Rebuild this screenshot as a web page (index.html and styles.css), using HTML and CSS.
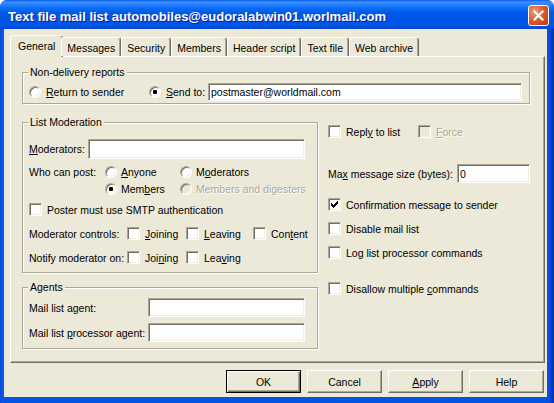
FILE: index.html
```html
<!DOCTYPE html>
<html lang="en">
<head>
<meta charset="utf-8">
<title>Text file mail list</title>
<link rel="stylesheet" href="styles.css">
</head>
<body>
<div class="window">
  <div class="titlebar">
    <span class="title">Text file mail list automobiles@eudoralabwin01.worlmail.com</span>
    <div class="close"><svg width="11" height="11" viewBox="0 0 11 11"><path d="M1.5 1.5 L9.5 9.5 M9.5 1.5 L1.5 9.5" stroke="#fff" stroke-width="2" stroke-linecap="square"/></svg></div>
  </div>
  <div class="client">
    <div class="tabs">
      <div class="tab active">General</div>
      <div class="tab">Messages</div>
      <div class="tab">Security</div>
      <div class="tab">Members</div>
      <div class="tab">Header script</div>
      <div class="tab">Text file</div>
      <div class="tab">Web archive</div>
    </div>
    <div class="panel">
      <div class="group group-nd">
        <div class="legend">Non-delivery reports</div>
        <div class="nd-row">
          <div class="opt w-return"><span class="radio"></span><span><u>R</u>eturn to sender</span></div>
          <div class="opt w-send"><span class="radio on"></span><span><u>S</u>end to:</span></div>
          <div class="edit w-sendto">postmaster@worldmail.com</div>
        </div>
      </div>
      <div class="columns">
        <div class="col-left">
          <div class="group group-mod">
            <div class="legend">List Moderation</div>
            <div class="mod-row">
              <span class="w-modlbl"><u>M</u>oderators:</span>
              <div class="edit w-modedit"></div>
            </div>
            <div class="who-grid">
              <span>Who can post:</span>
              <div class="opt"><span class="radio"></span><span><u>A</u>nyone</span></div>
              <div class="opt"><span class="radio"></span><span>M<u>o</u>derators</span></div>
              <span></span>
              <div class="opt"><span class="radio on"></span><span>Mem<u>b</u>ers</span></div>
              <div class="opt disabled"><span class="radio"></span><span>Members and digesters</span></div>
            </div>
            <div class="smtp-row">
              <div class="opt"><span class="cb"></span><span>Poster must use SMTP authentication</span></div>
            </div>
            <div class="ctrl-row">
              <span>Moderator controls:</span>
              <div class="opt"><span class="cb"></span><span><u>J</u>oining</span></div>
              <div class="opt"><span class="cb"></span><span><u>L</u>eaving</span></div>
              <div class="opt"><span class="cb"></span><span>Con<u>t</u>ent</span></div>
            </div>
            <div class="ctrl-row">
              <span>Notify moderator on:</span>
              <div class="opt"><span class="cb"></span><span>Joi<u>n</u>ing</span></div>
              <div class="opt"><span class="cb"></span><span>Lea<u>v</u>ing</span></div>
            </div>
          </div>
          <div class="group group-agents">
            <div class="legend">Agents</div>
            <div class="agent-row first">
              <span class="w-agentlbl">Mail list a<u>g</u>ent:</span>
              <div class="edit w-agentedit"></div>
            </div>
            <div class="agent-row">
              <span class="w-agentlbl">Mail list <u>p</u>rocessor agent:</span>
              <div class="edit w-agentedit"></div>
            </div>
          </div>
        </div>
        <div class="col-right">
          <div class="rrow r-reply">
            <div class="opt w-reply"><span class="cb"></span><span>Repl<u>y</u> to list</span></div>
            <div class="opt disabled"><span class="cb"></span><span><u>F</u>orce</span></div>
          </div>
          <div class="rrow r-max">
            <span class="w-maxlbl">Ma<u>x</u> message size (bytes):</span>
            <div class="edit w-maxedit">0</div>
          </div>
          <div class="rrow r-conf">
            <div class="opt"><span class="cb"><svg width="7" height="7" viewBox="0 0 7 7" shape-rendering="crispEdges"><polygon points="0,2 1,2 1,3 2,3 2,4 3,4 3,3 4,3 4,2 5,2 5,1 6,1 6,0 7,0 7,3 6,3 6,4 5,4 5,5 4,5 4,6 3,6 3,7 2,7 2,6 1,6 1,5 0,5" fill="#000"/></svg></span><span>Confirmation message to sender</span></div>
          </div>
          <div class="rrow r-gap7">
            <div class="opt"><span class="cb"></span><span>Disable mail list</span></div>
          </div>
          <div class="rrow r-gap7">
            <div class="opt"><span class="cb"></span><span>Lo<u>g</u> list processor commands</span></div>
          </div>
          <div class="rrow r-disallow">
            <div class="opt"><span class="cb"></span><span>Disallow multiple <u>c</u>ommands</span></div>
          </div>
        </div>
      </div>
    </div>
    <div class="buttons">
      <div class="btn default">OK</div>
      <div class="btn">Cancel</div>
      <div class="btn"><span><u>A</u>pply</span></div>
      <div class="btn">Help</div>
    </div>
  </div>
</div>
</body>
</html>
```

FILE: styles.css
```css
* { box-sizing: border-box; }
html, body { margin: 0; padding: 0; }
body {
  width: 554px;
  height: 403px;
  overflow: hidden;
  background: #ffffff;
  font-family: "Liberation Sans", Arial, sans-serif;
  font-size: 10.5px;
  color: #000;
}
u { text-decoration: underline; text-underline-offset: 1px; }

.window {
  width: 554px;
  height: 403px;
  display: flex;
  flex-direction: column;
  background: linear-gradient(to right, #0844d8 0, #0a5ae6 2px, #0055e5 4px, #0055e5 546px, #0b4fdc 549px, #0838c8 552px, #0a2fb8 554px);
  border-radius: 7px 7px 0 0;
  overflow: hidden;
}

.titlebar {
  flex: none;
  height: 29px;
  display: flex;
  align-items: flex-start;
  padding: 0 5px 0 8px;
  background: linear-gradient(#0a5be6 0, #3b8fff 2px, #2a86ff 4px, #0b6cf6 8px, #0059ea 13px, #0054e3 19px, #0056e6 25px, #004bd8 28px, #0042cc 29px);
}
.title {
  margin-top: 9px;
  color: #fff;
  font-weight: bold;
  font-size: 13px;
  line-height: 15px;
  text-shadow: 1px 1px 0 #0b1d8c;
  white-space: nowrap;
}
.close {
  margin-left: auto;
  margin-top: 5px;
  width: 21px;
  height: 21px;
  border: 1px solid #fff;
  border-radius: 3px;
  background: radial-gradient(circle at 30% 30%, #f0a080 0, #e06a42 35%, #cf4a1e 70%, #b83510 100%);
  display: flex;
  align-items: center;
  justify-content: center;
}

.client {
  flex: 1;
  margin: 0 7px 6px 4px;
  background: #ece9d8;
  padding: 6px 2px 4px 6px;
  display: flex;
  flex-direction: column;
}

.tabs {
  flex: none;
  height: 21px;
  display: flex;
  align-items: flex-end;
  padding-left: 2px;
  position: relative;
  z-index: 1;
}
.tab {
  height: 19px;
  padding: 1px 5px 0;
  display: flex;
  align-items: center;
  justify-content: center;
  white-space: nowrap;
  border: 1px solid #fff;
  border-bottom: 0;
  border-right-color: #716f64;
  border-radius: 3px 3px 0 0;
  box-shadow: inset -1px 0 #aca899;
  background: #ece9d8;
}
.tab.active {
  height: 22px;
  margin: 0 -2px -1px;
  padding: 0 7px 1px;
}

.panel {
  flex: none;
  height: 307px;
  border: 1px solid;
  border-color: #fff #716f64 #716f64 #fff;
  box-shadow: inset -1px -1px #aca899;
  padding: 15px 14px 0 11px;
}

.group {
  border: 1px solid #aca899;
  box-shadow: inset 1px 1px #fff, 1px 1px #fff;
  padding: 0 6px 6px;
}
.legend {
  width: fit-content;
  height: 13px;
  line-height: 13px;
  margin: -7px 0 0 -1px;
  padding: 0 2px;
  background: #ece9d8;
  white-space: nowrap;
}
.group-nd { padding-bottom: 2px; }

.opt {
  display: flex;
  align-items: center;
  white-space: nowrap;
}
.disabled { color: #aca899; text-shadow: 1px 1px 0 #fff; }
.disabled .radio, .disabled .cb { background: #ece9d8; }

.radio {
  flex: none;
  width: 12px;
  height: 12px;
  margin-right: 5px;
  border-radius: 50%;
  border: 1px solid;
  border-color: #aca899 #fff #fff #aca899;
  box-shadow: inset 1px 1px #716f64, inset -1px -1px #f1efe2;
  background: #fff;
  display: flex;
  align-items: center;
  justify-content: center;
}
.radio.on::after {
  content: "";
  width: 4px;
  height: 4px;
  border-radius: 1px;
  background: #000;
}
.cb {
  flex: none;
  width: 13px;
  height: 13px;
  margin-right: 5px;
  border: 1px solid;
  border-color: #aca899 #fff #fff #aca899;
  box-shadow: inset 1px 1px #716f64, inset -1px -1px #f1efe2;
  background: #fff;
  display: flex;
  align-items: center;
  justify-content: center;
}
.edit {
  flex: none;
  height: 20px;
  border: 1px solid;
  border-color: #aca899 #fff #fff #aca899;
  box-shadow: inset 1px 1px #716f64, inset -1px -1px #f1efe2;
  background: #fff;
  padding: 0 2px;
  display: flex;
  align-items: center;
  white-space: nowrap;
  overflow: hidden;
}

/* Non-delivery */
.nd-row {
  margin-top: 4px;
  height: 18px;
  display: flex;
  align-items: center;
}
.w-return { width: 120px; }
.w-send { width: 59px; }
.w-sendto { width: 314px; height: 18px; }

/* columns */
.columns {
  margin-top: 18px;
  display: grid;
  grid-template-columns: 296px 1fr;
  column-gap: 10px;
  align-items: start;
}

/* moderation */
.mod-row {
  margin-top: 10px;
  display: flex;
  align-items: center;
}
.w-modlbl { width: 59px; }
.w-modedit { width: 217px; }
.who-grid {
  margin-top: 4px;
  display: grid;
  grid-template-columns: 76px 75px auto;
  grid-auto-rows: 17px;
  align-items: center;
}
.who-grid .radio { margin-right: 4px; }
.smtp-row {
  margin-top: 4px;
  height: 17px;
  display: flex;
  align-items: center;
}
.ctrl-row {
  margin-top: 7px;
  height: 17px;
  display: grid;
  grid-template-columns: 98px 59px 67px auto;
  align-items: center;
  white-space: nowrap;
}

/* agents */
.group-agents { margin-top: 14px; }
.agent-row {
  margin-top: 6px;
  display: flex;
  align-items: center;
}
.agent-row.first { margin-top: 4px; }
.w-agentlbl { width: 119px; white-space: nowrap; }
.w-agentedit { width: 157px; height: 19px; }

/* right column */
.rrow {
  height: 17px;
  display: flex;
  align-items: center;
}
.r-reply { margin-top: 1px; }
.w-reply { width: 90px; }
.r-max { margin-top: 24px; height: 19px; }
.w-maxlbl { width: 129px; white-space: nowrap; }
.w-maxedit { width: 73px; height: 19px; }
.r-conf { margin-top: 13px; }
.r-gap7 { margin-top: 7px; }
.r-disallow { margin-top: 19px; }

/* buttons */
.buttons {
  flex: none;
  margin-top: 7px;
  padding-right: 1px;
  display: flex;
  justify-content: flex-end;
  gap: 6px;
}
.btn {
  width: 75px;
  height: 23px;
  display: flex;
  align-items: center;
  justify-content: center;
  border: 1px solid;
  border-color: #fff #716f64 #716f64 #fff;
  box-shadow: inset -1px -1px #aca899;
}
.btn.default {
  border-color: #000;
  box-shadow: inset 1px 1px #fff, inset -1px -1px #716f64, inset -2px -2px #aca899;
}
```
